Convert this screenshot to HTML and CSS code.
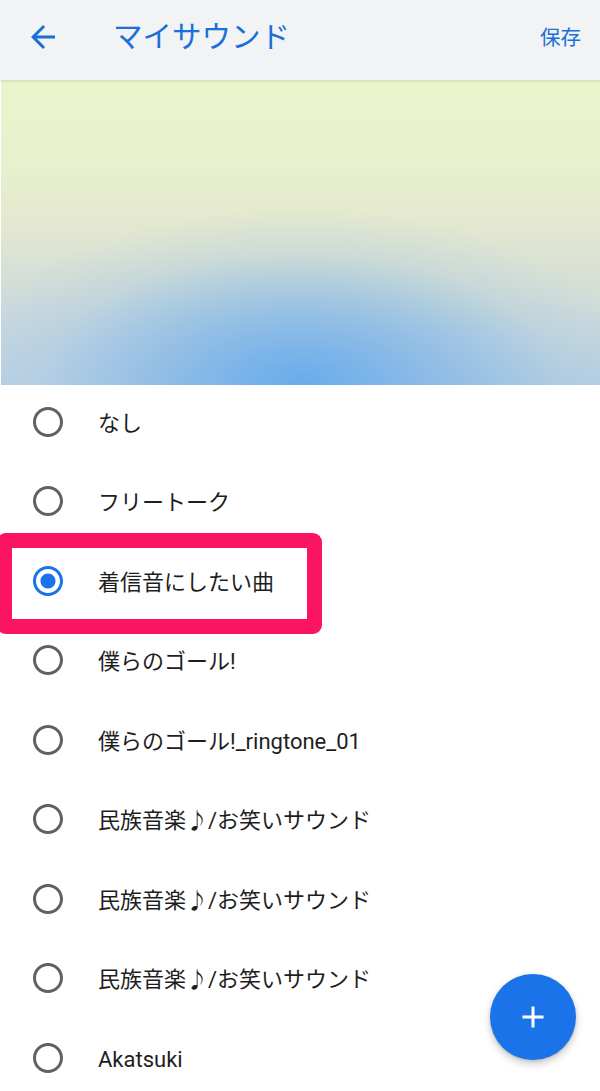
FILE: index.html
```html
<!DOCTYPE html>
<html lang="ja">
<head>
<meta charset="utf-8">
<link rel="stylesheet" href="styles.css">
</head>
<body>
<div class="screen">
  <header class="appbar">
    <svg class="back" viewBox="0 0 24 24" width="36" height="36"><path d="M20 11H7.830l5.59-5.59L12 4l-8 8 8 8 1.41-1.41L7.83 13H20v-2z"/></svg>
    <h1 class="title">マイサウンド</h1>
    <span class="save">保存</span>
  </header>
  <div class="banner"></div>
  <ul class="list">
    <li class="row"><svg class="radio" viewBox="0 0 24 24"><path d="M12 2C6.48 2 2 6.48 2 12s4.48 10 10 10 10-4.48 10-10S17.52 2 12 2zm0 18c-4.42 0-8-3.58-8-8s3.58-8 8-8 8 3.58 8 8-3.58 8-8 8z"/></svg><span class="label">なし</span></li>
    <li class="row"><svg class="radio" viewBox="0 0 24 24"><path d="M12 2C6.48 2 2 6.48 2 12s4.48 10 10 10 10-4.48 10-10S17.52 2 12 2zm0 18c-4.42 0-8-3.58-8-8s3.58-8 8-8 8 3.58 8 8-3.58 8-8 8z"/></svg><span class="label">フリートーク</span></li>
    <li class="row"><svg class="radio on" viewBox="0 0 24 24"><path d="M12 7c-2.76 0-5 2.24-5 5s2.24 5 5 5 5-2.24 5-5-2.24-5-5-5zm0-5C6.48 2 2 6.48 2 12s4.48 10 10 10 10-4.48 10-10S17.52 2 12 2zm0 18c-4.42 0-8-3.58-8-8s3.58-8 8-8 8 3.58 8 8-3.58 8-8 8z"/></svg><span class="label">着信音にしたい曲</span></li>
    <li class="row"><svg class="radio" viewBox="0 0 24 24"><path d="M12 2C6.48 2 2 6.48 2 12s4.48 10 10 10 10-4.48 10-10S17.52 2 12 2zm0 18c-4.42 0-8-3.58-8-8s3.58-8 8-8 8 3.58 8 8-3.58 8-8 8z"/></svg><span class="label">僕らのゴール!</span></li>
    <li class="row"><svg class="radio" viewBox="0 0 24 24"><path d="M12 2C6.48 2 2 6.48 2 12s4.48 10 10 10 10-4.48 10-10S17.52 2 12 2zm0 18c-4.42 0-8-3.58-8-8s3.58-8 8-8 8 3.58 8 8-3.58 8-8 8z"/></svg><span class="label">僕らのゴール!_ringtone_01</span></li>
    <li class="row"><svg class="radio" viewBox="0 0 24 24"><path d="M12 2C6.48 2 2 6.48 2 12s4.48 10 10 10 10-4.48 10-10S17.52 2 12 2zm0 18c-4.42 0-8-3.58-8-8s3.58-8 8-8 8 3.58 8 8-3.58 8-8 8z"/></svg><span class="label">民族音楽♪/お笑いサウンド</span></li>
    <li class="row"><svg class="radio" viewBox="0 0 24 24"><path d="M12 2C6.48 2 2 6.48 2 12s4.48 10 10 10 10-4.48 10-10S17.52 2 12 2zm0 18c-4.42 0-8-3.58-8-8s3.58-8 8-8 8 3.58 8 8-3.58 8-8 8z"/></svg><span class="label">民族音楽♪/お笑いサウンド</span></li>
    <li class="row"><svg class="radio" viewBox="0 0 24 24"><path d="M12 2C6.48 2 2 6.48 2 12s4.48 10 10 10 10-4.48 10-10S17.52 2 12 2zm0 18c-4.42 0-8-3.58-8-8s3.58-8 8-8 8 3.58 8 8-3.58 8-8 8z"/></svg><span class="label">民族音楽♪/お笑いサウンド</span></li>
    <li class="row"><svg class="radio" viewBox="0 0 24 24"><path d="M12 2C6.48 2 2 6.48 2 12s4.48 10 10 10 10-4.48 10-10S17.52 2 12 2zm0 18c-4.42 0-8-3.58-8-8s3.58-8 8-8 8 3.58 8 8-3.58 8-8 8z"/></svg><span class="label">Akatsuki</span></li>
    <li class="highlight"></li>
  </ul>
  <button class="fab" aria-label="追加"><svg viewBox="0 0 24 24" width="36" height="36"><path d="M19 13h-6v6h-2v-6H5v-2h6V5h2v6h6v2z"/></svg></button>
</div>
</body>
</html>
```

FILE: styles.css
```css
* { box-sizing: border-box; }
html, body {
  margin: 0;
  padding: 0;
  background: #ffffff;
}
body {
  font-family: "Roboto", "Noto Sans CJK JP", "Noto Sans", sans-serif;
  color: #202124;
}
.screen {
  position: relative;
  width: 600px;
  height: 1091px;
  overflow: hidden;
  background: #fff;
}
.appbar {
  position: relative;
  z-index: 2;
  height: 80px;
  background: #f1f3f4;
  display: flex;
  align-items: center;
  padding: 0 19px 4px 25px;
  box-shadow: 0 1px 3px rgba(0,0,0,0.12);
}
.back {
  fill: #1a6fd8;
  flex: none;
  position: relative;
  top: -1px;
}
.title {
  margin: 0 0 0 52px;
  font-size: 29.5px;
  font-weight: 400;
  color: #1a6fd8;
  flex: 1;
  line-height: 1;
}
.save {
  font-size: 20.5px;
  color: #1a6fd8;
  line-height: 1;
}
.banner {
  height: 305px;
  margin-left: 1px;
  background:
    radial-gradient(ellipse 58% 58% at 50% 100%, rgba(104,172,236,1) 0%, rgba(120,178,232,0.72) 35%, rgba(150,192,225,0.22) 75%, rgba(160,195,220,0) 100%),
    radial-gradient(ellipse 80% 45% at 15% 100%, rgba(195,212,228,0.6) 0%, rgba(195,212,228,0) 100%),
    linear-gradient(180deg, #e9f5cd 0%, #e8f0cd 28%, #e3e7d0 48%, #d4ded7 70%, #c2d5df 88%, #b6cee2 100%);
}
.list {
  position: relative;
  list-style: none;
  margin: -3px 0 0 0;
  padding: 0;
}
.row {
  height: 79.5px;
  display: flex;
  align-items: center;
  padding-left: 30px;
  gap: 32px;
}
.radio {
  width: 36px;
  height: 36px;
  flex: none;
  fill: #616161;
}
.radio.on { fill: #1a73e8; }
.label {
  font-size: 22px;
  line-height: 1;
  color: #1e1e1e;
  padding-top: 4px;
}
.highlight {
  position: absolute;
  left: -3px;
  top: 151px;
  width: 325px;
  height: 101px;
  border: 15px solid #fb1462;
  border-radius: 9px;
  pointer-events: none;
}
.fab {
  position: absolute;
  left: 490px;
  top: 974px;
  width: 86px;
  height: 86px;
  border-radius: 50%;
  border: none;
  background: #1a73e8;
  display: flex;
  align-items: center;
  justify-content: center;
  padding: 0;
  box-shadow: 0 4px 8px rgba(0,0,0,0.2), 0 1px 3px rgba(0,0,0,0.15);
}
.fab svg { fill: #ffffff; }
```
